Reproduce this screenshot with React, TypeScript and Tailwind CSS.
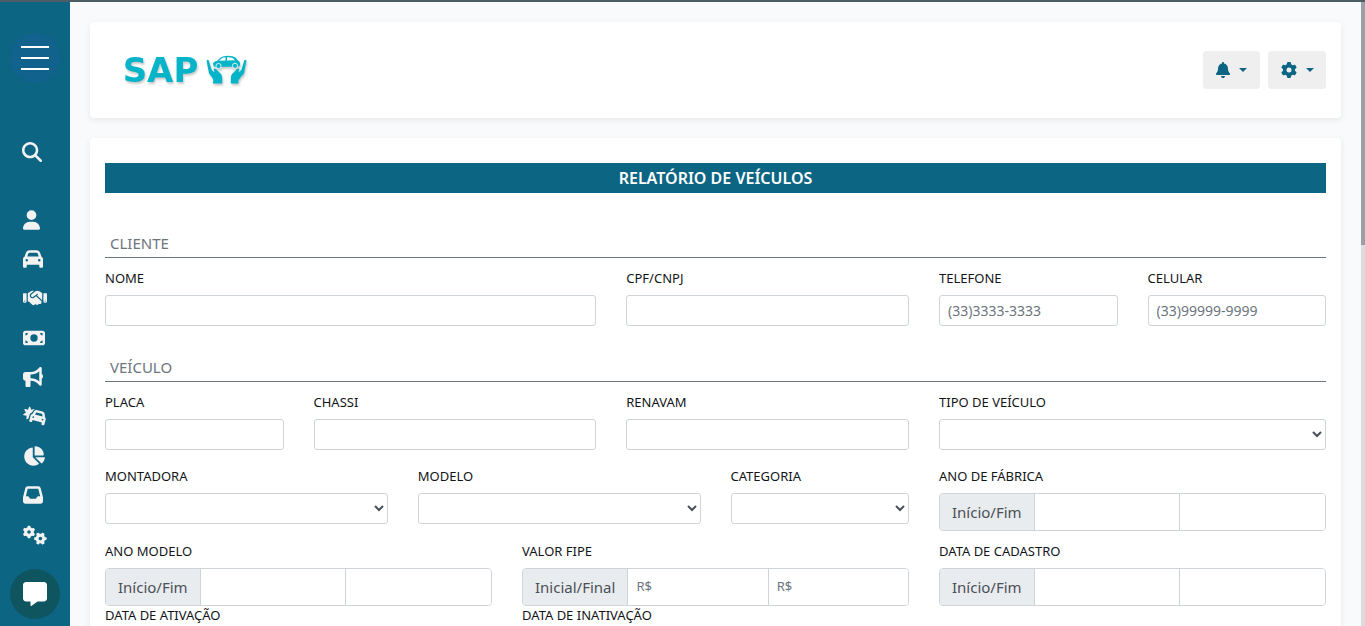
import { useId } from "react";
import type { ReactNode } from "react";
import {
  FaBell,
  FaBullhorn,
  FaCar,
  FaCarBurst,
  FaChartPie,
  FaGear,
  FaGears,
  FaHandshake,
  FaInbox,
  FaMagnifyingGlass,
  FaMessage,
  FaMoneyBill,
  FaUser,
} from "react-icons/fa6";

const menu = [
  { label: "Clientes", icon: <FaUser className="h-5 w-[17px]" /> },
  { label: "Veículos", icon: <FaCar size={20} /> },
  { label: "Negociações", icon: <FaHandshake size={24} /> },
  { label: "Financeiro", icon: <FaMoneyBill size={22} /> },
  { label: "Marketing", icon: <FaBullhorn size={20} /> },
  { label: "Sinistros", icon: <FaCarBurst size={24} /> },
  { label: "Relatórios", icon: <FaChartPie size={22} /> },
  { label: "Arquivos", icon: <FaInbox size={20} /> },
  { label: "Configurações", icon: <FaGears size={24} /> },
];

const control =
  "block h-[31px] w-full rounded-[3px] border border-[#ced4da] bg-white text-sm text-[#495057] placeholder:text-[#6c757d]";

function Sidebar() {
  return (
    <aside className="flex w-[70px] shrink-0 flex-col bg-[#0c6583] text-[#f2f2f2]">
      <button
        aria-label="Menu"
        className="mt-[31px] ml-[10px] flex size-[50px] shrink-0 flex-col items-center justify-center gap-[9px] rounded-full bg-[#11628c]"
      >
        <span className="h-[2px] w-7 bg-white" />
        <span className="h-[2px] w-7 bg-white" />
        <span className="h-[2px] w-7 bg-white" />
      </button>
      <button aria-label="Pesquisar" className="mt-[57px] ml-[22px] flex size-6 shrink-0 items-center">
        <FaMagnifyingGlass size={20} />
      </button>
      <nav className="mt-9 ml-[23px] flex h-[354px] shrink-0 flex-col justify-between">
        {menu.map((item) => (
          <a key={item.label} href="#" aria-label={item.label} className="flex h-[39px] items-center">
            {item.icon}
          </a>
        ))}
      </nav>
      <button
        aria-label="Mensagens"
        className="mt-[15px] ml-[10px] flex size-[50px] shrink-0 items-center justify-center rounded-full bg-[#0e555f] text-white"
      >
        <FaMessage size={24} />
      </button>
    </aside>
  );
}

function Logo() {
  return (
    <a href="#" className="flex items-center text-[#06b4c9] drop-shadow-[1px_2px_1px_rgba(0,0,0,0.22)]">
      <span className="w-[91px] text-center font-['DejaVu_Sans'] text-[34px] leading-8 font-bold">SAP</span>
      <svg viewBox="0 0 41 31" className="h-[31px] w-[41px]" fill="currentColor" aria-hidden="true">
        <path d="M0.500 5.500 Q1.800 4 2.800 5.500 L5.500 14.500 L7.500 16.800 L8.500 16.500 L7.500 14.500 Q8.500 12.800 10 14 L15 19 Q16.500 21 16.200 23.500 L16.200 28.500 L6.500 28.500 Q8.200 25.500 6.500 23 L3 18.500 Z" />
        <path d="M40.500 5.500 Q39.200 4 38.200 5.500 L35.500 14.500 L33.500 16.800 L32.500 16.500 L33.500 14.500 Q32.500 12.800 31 14 L26 19 Q24.500 21 24.800 23.500 L24.800 28.500 L32.500 28.500 Q31.800 25.500 34 23 L38 18.500 Z" />
        <path d="M7 8.500 Q7.500 6.500 11 6 L14.500 2.500 Q17 0.700 22 0.700 Q27 0.700 29.500 2.500 L32 5.500 Q34.500 6.500 34 10 L33 11.500 L9 12 Q7 11.500 7 8.500 Z" />
        <path d="M13 5.800 L15.500 3.400 Q17 2.300 19.500 2.200 L19.500 5.500 Z M21 2.200 Q25 2 27 3.200 L29 5.200 L21 5.500 Z" fill="#fff" />
        <circle cx="12.500" cy="11" r="2.600" stroke="#fff" strokeWidth="0.800" />
        <circle cx="29" cy="10.800" r="2.600" stroke="#fff" strokeWidth="0.800" />
      </svg>
    </a>
  );
}

function Caret() {
  return <span className="h-0 w-0 border-x-4 border-t-4 border-x-transparent border-t-[#0c6583]" />;
}

function Section({ title, className }: { title: string; className: string }) {
  return (
    <h2
      className={`${className} mb-[11px] border-b border-[#6c757d] px-[5px] pb-[2px] text-[15px] leading-6 text-[#6c757d]`}
    >
      {title}
    </h2>
  );
}

function Row({ children, className = "" }: { children: ReactNode; className?: string }) {
  return <div className={`${className} grid grid-cols-12 items-start gap-x-[30px]`}>{children}</div>;
}

type FieldProps = { label: string; span: string; placeholder?: string };

function Label({ id, text }: { id: string; text: string }) {
  return (
    <label htmlFor={id} className="mb-[7px] block text-[13px] leading-[19px] text-[#121518]">
      {text}
    </label>
  );
}

function TextField({ label, span, placeholder }: FieldProps) {
  const id = useId();
  return (
    <div className={span}>
      <Label id={id} text={label} />
      <input id={id} type="text" placeholder={placeholder} className={`${control} px-2`} />
    </div>
  );
}

function SelectField({ label, span }: FieldProps) {
  const id = useId();
  return (
    <div className={span}>
      <Label id={id} text={label} />
      <select id={id} className={`${control} pr-px`}>
        <option value="" />
      </select>
    </div>
  );
}

function RangeField({ label, prefix = "Início/Fim", placeholder }: { label: string; prefix?: string; placeholder?: string }) {
  const id = useId();
  return (
    <div className="col-span-4">
      <Label id={id} text={label} />
      <div className="flex h-[38px] overflow-hidden rounded-[4px] border border-[#ced4da] text-[#495057]">
        <span className="flex shrink-0 items-center border-r border-[#ced4da] bg-[#e9ecef] px-3 text-[15px]">
          {prefix}
        </span>
        <input
          id={id}
          type="text"
          placeholder={placeholder}
          className="w-0 flex-1 border-r border-[#ced4da] bg-white px-2 text-[13px] placeholder:text-[#6c757d]"
        />
        <input
          type="text"
          aria-label={`${label} final`}
          placeholder={placeholder}
          className="w-0 flex-1 bg-white px-2 text-[13px] placeholder:text-[#6c757d]"
        />
      </div>
    </div>
  );
}

export default function App() {
  return (
    <div className="flex h-screen flex-col overflow-hidden bg-[#f9fafc] font-['Noto_Sans',sans-serif]">
      <div className="h-[2px] shrink-0 bg-[#4b5e68]" />
      <div className="flex min-h-0 flex-1">
        <Sidebar />
        <div className="flex min-w-0 flex-1 flex-col gap-5 overflow-hidden px-5 pt-5">
          <header className="flex h-24 shrink-0 items-center justify-between rounded-[4px] bg-white pr-[15px] pl-[25px] shadow-[0_2px_6px_rgba(0,0,0,0.08)]">
            <Logo />
            <div className="flex gap-2 text-[#0c6583]">
              <button
                aria-label="Notificações"
                className="flex h-[38px] w-[57px] items-center justify-center gap-[9px] rounded-[4px] bg-[#efefef]"
              >
                <FaBell className="h-4 w-[14px]" />
                <Caret />
              </button>
              <button
                aria-label="Opções"
                className="flex h-[38px] w-[58px] items-center justify-center gap-[9px] rounded-[4px] bg-[#efefef]"
              >
                <FaGear size={16} />
                <Caret />
              </button>
            </div>
          </header>
          <main className="shrink-0 rounded-[4px] bg-white px-[15px] pt-[25px] pb-10 shadow-[0_2px_6px_rgba(0,0,0,0.08)]">
            <h1 className="bg-[#0c6583] text-center text-base leading-[30px] font-semibold text-white">
              RELATÓRIO DE VEÍCULOS
            </h1>
            <form>
              <Section title="CLIENTE" className="mt-[38px]" />
              <Row>
                <TextField label="NOME" span="col-span-5" />
                <TextField label="CPF/CNPJ" span="col-span-3" />
                <TextField label="TELEFONE" span="col-span-2" placeholder="(33)3333-3333" />
                <TextField label="CELULAR" span="col-span-2" placeholder="(33)99999-9999" />
              </Row>
              <Section title="VEÍCULO" className="mt-[29px]" />
              <Row>
                <TextField label="PLACA" span="col-span-2" />
                <TextField label="CHASSI" span="col-span-3" />
                <TextField label="RENAVAM" span="col-span-3" />
                <SelectField label="TIPO DE VEÍCULO" span="col-span-4" />
              </Row>
              <Row className="mt-[17px]">
                <SelectField label="MONTADORA" span="col-span-3" />
                <SelectField label="MODELO" span="col-span-3" />
                <SelectField label="CATEGORIA" span="col-span-2" />
                <RangeField label="ANO DE FÁBRICA" />
              </Row>
              <Row className="mt-[11px]">
                <RangeField label="ANO MODELO" />
                <RangeField label="VALOR FIPE" prefix="Inicial/Final" placeholder="R$" />
                <RangeField label="DATA DE CADASTRO" />
              </Row>
              <Row>
                <RangeField label="DATA DE ATIVAÇÃO" />
                <RangeField label="DATA DE INATIVAÇÃO" />
              </Row>
            </form>
          </main>
        </div>
        <div className="w-1 shrink-0 bg-[#dcdcdc]">
          <div className="h-[39%] bg-[#9aa0a6]" />
        </div>
      </div>
    </div>
  );
}
